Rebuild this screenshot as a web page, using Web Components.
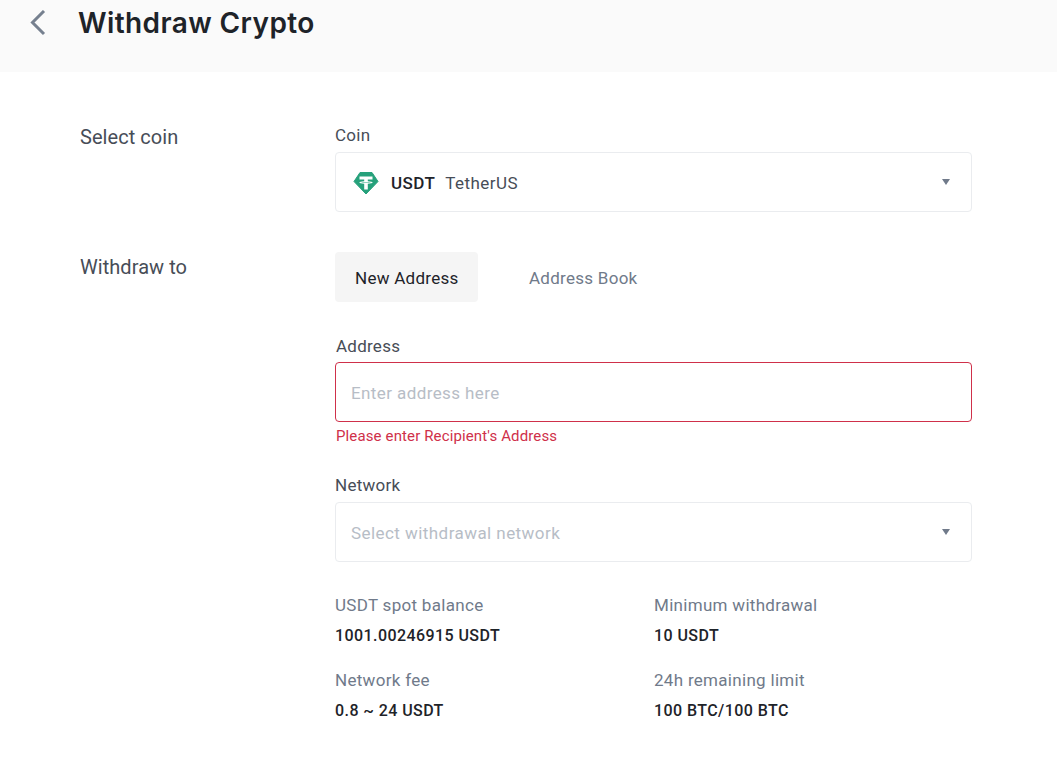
<!DOCTYPE html>
<html>
<head>
<meta charset="utf-8">
<title>Withdraw Crypto</title>
<style>
  html, body { margin: 0; background: #fff; }
  body { font-family: Roboto, "Liberation Sans", sans-serif; color: #1e2329; height: 769px; overflow: hidden; }
</style>
</head>
<body>
<page-header>Withdraw Crypto</page-header>
<form-row label="Select coin" style="margin-top:53px">
  <field-label>Coin</field-label>
  <select-box>
    <coin-value></coin-value>
  </select-box>
</form-row>
<form-row label="Withdraw to" style="margin-top:40px;--name-top:3px">
  <address-tabs></address-tabs>
  <field-label style="margin:34px 0 6px 1px;">Address</field-label>
  <address-input placeholder="Enter address here" error="Please enter Recipient's Address"></address-input>
  <field-label style="margin-top:29px">Network</field-label>
  <select-box placeholder>Select withdrawal network</select-box>
  <info-grid style="margin-top:33px">
    <info-item label="USDT spot balance" value="1001.00246915 USDT"></info-item>
    <info-item label="Minimum withdrawal" value="10 USDT"></info-item>
    <info-item label="Network fee" value="0.8 ~ 24 USDT"></info-item>
    <info-item label="24h remaining limit" value="100 BTC/100 BTC"></info-item>
  </info-grid>
</form-row>
<script>
  function define(name, html, extra) {
    class El extends HTMLElement {
      constructor() {
        super();
        this.attachShadow({ mode: "open" });
        this.shadowRoot.innerHTML = html;
      }
      connectedCallback() {
        if (extra) extra(this);
      }
    }
    customElements.define(name, El);
  }

  define("page-header", `
    <style>
      :host { display: flex; align-items: flex-start; height: 72px; background: #fafafa; box-sizing: border-box; padding: 8px 0 0 29px; }
      svg { display: block; margin-top: 2px; }
      h1 { margin: 0 0 0 29px; font: 600 28px/30px Inter, Roboto, sans-serif; color: #1e2329; letter-spacing: 0.4px; }
    </style>
    <svg width="20" height="28" viewBox="0 0 20 28"><path d="M15 1 L3.5 12.5 L15 24" fill="none" stroke="#76808f" stroke-width="3"/></svg>
    <h1><slot></slot></h1>
  `);

  define("form-row", `
    <style>
      :host { display: flex; padding-left: 80px; }
      .name { width: 255px; flex: none; font-size: 20px; line-height: 24px; color: #474d57; padding-top: var(--name-top, 0); letter-spacing: 0.05px; }
      .body { width: 637px; display: flex; flex-direction: column; }
    </style>
    <div class="name"></div>
    <div class="body"><slot></slot></div>
  `, (el) => { el.shadowRoot.querySelector(".name").textContent = el.getAttribute("label"); });

  define("field-label", `
    <style>
      :host { display: block; font-size: 17px; line-height: 20px; color: #474d57; margin-bottom: 7px; letter-spacing: 0.25px; }
    </style>
    <slot></slot>
  `);

  define("select-box", `
    <style>
      :host { display: flex; align-items: center; justify-content: space-between; box-sizing: border-box; height: 60px; border: 1px solid #eaecef; border-radius: 4px; padding: 0 21px 0 15px; font-size: 17px; }
      :host([placeholder]) { color: #b7bdc6; letter-spacing: 0.44px; }
      div { padding-top: 2px; }
      i { display: block; width: 0; height: 0; border: 4.5px solid transparent; border-top: 6px solid #707a8a; border-bottom: 0; }
    </style>
    <div><slot></slot></div>
    <i></i>
  `);

  define("coin-value", `
    <style>
      :host { display: flex; align-items: center; margin: -2px 0 0 2px; font-size: 17px; color: #474d57; letter-spacing: 0.45px; }
      svg { display: block; margin: 2px 12px 0 0; }
      span { padding-top: 2px; }
      b { font-weight: 500; color: #1e2329; margin-right: 10px; padding-top: 2px; }
    </style>
    <svg width="26" height="24" viewBox="0 0 26 24">
      <path d="M7 1.5 H19 L25 10.5 L13 23 L1 10.5 Z" fill="#26a17b" stroke="#26a17b" stroke-linejoin="round"/>
      <path d="M6.5 5.5 H19.5 V8.5 H14.8 V10.2 C17.5 10.4 19.6 10.9 19.6 11.5 C19.6 12.1 17.5 12.6 14.8 12.8 V18.5 H11.2 V12.8 C8.5 12.6 6.4 12.1 6.4 11.5 C6.4 10.9 8.5 10.4 11.2 10.2 V8.5 H6.5 Z" fill="#fff"/>
      <path d="M8 11.5 C9.5 11.1 16.5 11.1 18 11.5 C16.5 11.9 9.5 11.9 8 11.5 Z" fill="#26a17b"/>
    </svg>
    <b>USDT</b><span>TetherUS</span>
  `);

  define("address-tabs", `
    <style>
      :host { display: flex; font-size: 17px; line-height: 52px; height: 50px; letter-spacing: 0.27px; }
      div { padding: 0 20px; border-radius: 4px; color: #707a8a; height: 50px; }
      .on { background: #f5f5f5; color: #1e2329; margin-right: 31px; width: 103px; white-space: nowrap; }
    </style>
    <div class="on">New Address</div><div class="off">Address Book</div>
  `);

  define("address-input", `
    <style>
      :host { display: block; }
      .box { box-sizing: border-box; height: 60px; border: 1px solid #cf304a; border-radius: 4px; padding: 1px 15px 0; font-size: 17px; line-height: 58px; color: #b7bdc6; letter-spacing: 0.4px; }
      .err { font-size: 15px; line-height: 20px; color: #cf304a; margin: 4px 0 0 1px; letter-spacing: 0.13px; }
    </style>
    <div class="box"></div>
    <div class="err"></div>
  `, (el) => {
    el.shadowRoot.querySelector(".box").textContent = el.getAttribute("placeholder");
    el.shadowRoot.querySelector(".err").textContent = el.getAttribute("error");
  });

  define("info-grid", `
    <style>
      :host { display: grid; grid-template-columns: 319px 1fr; row-gap: 24px; }
    </style>
    <slot></slot>
  `);

  define("info-item", `
    <style>
      :host { display: block; }
      .l { font-size: 17px; line-height: 20px; color: #707a8a; letter-spacing: 0.3px; }
      .v { font-size: 16px; line-height: 20px; font-weight: 500; color: #1e2329; margin-top: 11px; letter-spacing: 0.42px; }
    </style>
    <div class="l"></div>
    <div class="v"></div>
  `, (el) => {
    el.shadowRoot.querySelector(".l").textContent = el.getAttribute("label");
    el.shadowRoot.querySelector(".v").textContent = el.getAttribute("value");
  });
</script>
</body>
</html>
